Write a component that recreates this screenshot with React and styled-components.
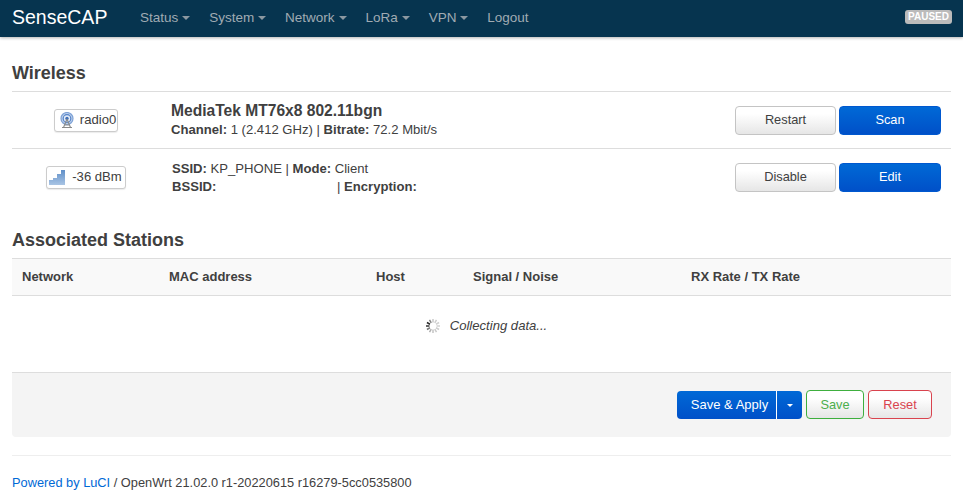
import React from 'react';
import styled, { createGlobalStyle } from 'styled-components';

const GlobalStyle = createGlobalStyle`
  html, body { margin: 0; padding: 0; background: #fff; }
  body {
    font-family: "Liberation Sans", Arial, sans-serif;
    font-size: 13.1px;
    line-height: 18px;
    color: #404040;
  }
  * { box-sizing: border-box; }
`;

// HEADER

const Header = styled.header`
  height: 37px;
  background: #06344f;
  box-shadow: 0 1px 3px rgba(0, 0, 0, 0.3);
  display: flex;
  align-items: center;
  padding: 0 11px 0 12px;
`;

const Brand = styled.a`
  color: #fff;
  font-size: 19.5px;
  width: 128px;
  position: relative;
  top: -2px;
`;

const Nav = styled.nav`
  display: flex;
  gap: 18.9px;
  flex: 1;
  position: relative;
  top: -1px;
`;

const NavLink = styled.a`
  color: #a0abb3;
  font-size: 13.5px;
  display: flex;
  align-items: center;
  gap: 4px;
`;

const Caret = styled.span`
  width: 0;
  height: 0;
  margin-top: 1px;
  border-left: ${p => p.$size || 4}px solid transparent;
  border-right: ${p => p.$size || 4}px solid transparent;
  border-top: ${p => p.$size || 4}px solid ${p => p.$color || '#8b98a1'};
`;

const Paused = styled.span`
  background: #bbb;
  color: #fff;
  font-size: 10px;
  line-height: 14px;
  font-weight: 700;
  border-radius: 3px;
  padding: 0 3px;
  position: relative;
  top: -2px;
`;

// CONTENT

const Main = styled.main`
  padding: 0 12px;
`;

const Title = styled.h2`
  margin: 0;
  font-size: 18px;
  line-height: 22px;
  font-weight: 700;
  color: #404040;
`;

const WirelessTitle = styled(Title)`
  padding-top: 25px;
  height: 54px;
`;

const StationsTitle = styled(Title)`
  padding-top: 24px;
  height: 53px;
`;

const DeviceRow = styled.div`
  display: grid;
  grid-template-columns: 159px 1fr auto;
  align-items: center;
  height: 57px;
  border-top: 1px solid #ddd;
  padding-right: 10px;
`;

const BadgeCell = styled.div`
  display: flex;
  justify-content: center;
  padding-right: 11px;
`;

const Badge = styled.span`
  display: inline-flex;
  align-items: center;
  gap: ${p => p.$gap}px;
  height: 23px;
  padding: ${p => p.$pad};
  border: 1px solid #ccc;
  border-radius: 3px;
  box-shadow: 0 1px 1px rgba(0, 0, 0, 0.08);
  font-size: 13.1px;
  color: #404040;
  background: #fff;
`;

const RadioName = styled.div`
  font-size: 15.6px;
  line-height: 20px;
  font-weight: 700;
`;

const InfoBlock = styled.div`
  padding-top: ${p => p.$top || 0}px;
`;

const Details = styled.div`
  font-size: 13.1px;
  line-height: 18px;
  padding-left: ${p => p.$indent || 0}px;
`;

const Gap = styled.span`
  display: inline-block;
  width: ${p => p.$w}px;
`;

const Actions = styled.div`
  display: flex;
  gap: 3px;
`;

const Button = styled.button`
  width: ${p => p.$w}px;
  height: 29px;
  padding: 0 0 1px;
  border-radius: 4px;
  font-family: inherit;
  font-size: 12.8px;
  border: 1px solid ${p => p.$primary ? '#0058cf' : p.$border || '#c4c4c4'};
  color: ${p => p.$primary ? '#fff' : p.$color || '#404040'};
  background: ${p => p.$primary
    ? 'linear-gradient(#0069d6, #0050c8)'
    : 'linear-gradient(#fff, #fff 25%, #e6e6e6)'};
`;

const StationsHead = styled.div`
  display: grid;
  grid-template-columns: 147px 207px 97px 218px 1fr;
  align-items: center;
  height: 38px;
  padding-left: 10px;
  background: #f9f9f9;
  border-top: 1px solid #ddd;
  border-bottom: 1px solid #ddd;
  font-size: 13px;
  font-weight: 700;
`;

const Loading = styled.div`
  height: 60px;
  display: flex;
  align-items: center;
  justify-content: center;
  gap: 9px;
  font-size: 13.1px;
  font-style: italic;
  padding-left: 9px;
`;

const ActionBar = styled.div`
  margin-top: 16px;
  height: 65px;
  background: #f4f4f4;
  border-top: 1px solid #ddd;
  border-radius: 0 0 4px 4px;
  display: flex;
  justify-content: flex-end;
  align-items: center;
  gap: 4px;
  padding: 0 19px 1px 0;
`;

const SplitButton = styled.div`
  display: flex;
  width: 125px;
  height: 28px;
  border-radius: 4px;
  color: #fff;
  font-size: 13px;
  background: linear-gradient(#0069d6, #0050c8);
`;

const SplitLabel = styled.span`
  flex: 1;
  display: flex;
  align-items: center;
  justify-content: center;
  padding-left: 6px;
  border-right: 1px solid #fff;
`;

const SplitArrow = styled.span`
  width: 25px;
  display: flex;
  align-items: center;
  justify-content: center;
`;

const Footer = styled.footer`
  margin: 18px 12px 0;
  padding-top: 18px;
  border-top: 1px solid #eee;
  font-size: 12.8px;
  line-height: 18px;
`;

const FooterLink = styled.a`
  color: #0069d6;
`;

// ICONS

const TowerIcon = () => (
  <svg width="16" height="16" viewBox="0 0 16 16">
    <circle cx="8" cy="6.5" r="6" fill="#bcd0ec" stroke="#7fa2d6" strokeWidth="1.2" />
    <circle cx="8" cy="6.5" r="3.8" fill="#e4ecf8" stroke="#5583c8" strokeWidth="1.2" />
    <circle cx="8" cy="6.5" r="1.7" fill="#3f6fb8" />
    <path d="M8 7 L4.5 15.5 M8 7 L11.5 15.5 M5.5 13 H10.5 M3 15.5 H13" stroke="#8a8a8a" strokeWidth="1.1" fill="none" />
  </svg>
);

const SignalIcon = () => (
  <svg width="16" height="15" viewBox="0 0 16 15">
    <defs>
      <linearGradient id="bar" x1="0" y1="0" x2="0" y2="1">
        <stop offset="0" stopColor="#5f8fc8" />
        <stop offset="1" stopColor="#a9c4e4" />
      </linearGradient>
    </defs>
    <path d="M0 15 V10 H4 V8 H8 V4 H12 V0 H16 V15 Z" fill="url(#bar)" />
  </svg>
);

const spinnerShades = [200, 205, 210, 210, 205, 200, 195, 175, 120, 50, 40, 130];

const Spinner = () => (
  <svg width="16" height="16" viewBox="0 0 16 16">
    {spinnerShades.map((shade, i) => (
      <line
        key={i}
        x1="8" y1="1" x2="8" y2="4.5"
        stroke={`rgb(${shade},${shade},${shade})`}
        strokeWidth="1.5"
        transform={`rotate(${i * 30} 8 8)`}
      />
    ))}
  </svg>
);

const navItems = ['Status', 'System', 'Network', 'LoRa', 'VPN'];

export default function App() {
  return (
    <>
      <GlobalStyle />
      <Header>
        <Brand>SenseCAP</Brand>
        <Nav>
          {navItems.map(item => (
            <NavLink key={item}>{item} <Caret /></NavLink>
          ))}
          <NavLink>Logout</NavLink>
        </Nav>
        <Paused>PAUSED</Paused>
      </Header>

      <Main>
        <WirelessTitle>Wireless</WirelessTitle>
        <DeviceRow>
          <BadgeCell>
            <Badge $gap={5} $pad="0 1px 0 4px"><TowerIcon />radio0</Badge>
          </BadgeCell>
          <InfoBlock>
            <RadioName>MediaTek MT76x8 802.11bgn</RadioName>
            <Details><b>Channel:</b> 1 (2.412 GHz) | <b>Bitrate:</b> 72.2 Mbit/s</Details>
          </InfoBlock>
          <Actions>
            <Button $w={101}>Restart</Button>
            <Button $w={102} $primary>Scan</Button>
          </Actions>
        </DeviceRow>
        <DeviceRow>
          <BadgeCell>
            <Badge $gap={7} $pad="0 3px 0 2px"><SignalIcon />-36 dBm</Badge>
          </BadgeCell>
          <InfoBlock $top={2}>
            <Details $indent={1}><b>SSID:</b> KP_PHONE | <b>Mode:</b> Client</Details>
            <Details $indent={1}><b>BSSID:</b><Gap $w={117} /> | <b>Encryption:</b></Details>
          </InfoBlock>
          <Actions>
            <Button $w={101}>Disable</Button>
            <Button $w={102} $primary>Edit</Button>
          </Actions>
        </DeviceRow>

        <StationsTitle>Associated Stations</StationsTitle>
        <StationsHead>
          <span>Network</span>
          <span>MAC address</span>
          <span>Host</span>
          <span>Signal / Noise</span>
          <span>RX Rate / TX Rate</span>
        </StationsHead>
        <Loading><Spinner />Collecting data...</Loading>

        <ActionBar>
          <SplitButton>
            <SplitLabel>Save &amp; Apply</SplitLabel>
            <SplitArrow><Caret $size={3} $color="#fff" /></SplitArrow>
          </SplitButton>
          <Button $w={58} $border="#3eaf3e" $color="#4cae4c">Save</Button>
          <Button $w={64} $border="#d9434e" $color="#d9434e">Reset</Button>
        </ActionBar>
      </Main>

      <Footer>
        <FooterLink>Powered by LuCI</FooterLink> / OpenWrt 21.02.0 r1-20220615 r16279-5cc0535800
      </Footer>
    </>
  );
}
